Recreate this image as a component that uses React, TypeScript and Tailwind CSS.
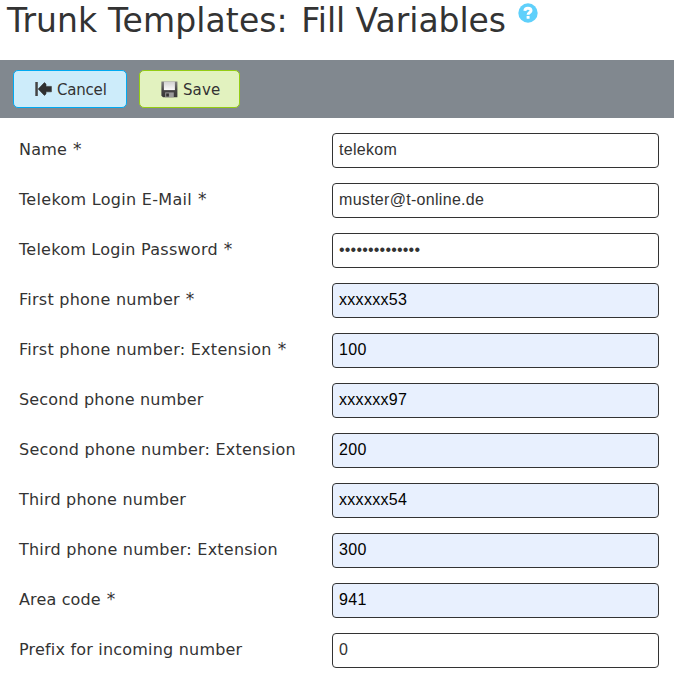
type Field = { label: string; value: string; tracking: string; required?: boolean; filled?: boolean };

const fields: Field[] = [
  { label: "Name", value: "telekom", tracking: "tracking-[0.2px]", required: true },
  { label: "Telekom Login E-Mail", value: "muster@t-online.de", tracking: "tracking-[0.3px]", required: true },
  { label: "Telekom Login Password", value: "••••••••••••••", tracking: "tracking-[0.25px]", required: true },
  { label: "First phone number", value: "xxxxxx53", tracking: "tracking-[0.25px]", required: true, filled: true },
  { label: "First phone number: Extension", value: "100", tracking: "tracking-[0.26px]", required: true, filled: true },
  { label: "Second phone number", value: "xxxxxx97", tracking: "tracking-[0.15px]", filled: true },
  { label: "Second phone number: Extension", value: "200", tracking: "tracking-[0.22px]", filled: true },
  { label: "Third phone number", value: "xxxxxx54", tracking: "tracking-[0.2px]", filled: true },
  { label: "Third phone number: Extension", value: "300", tracking: "tracking-[0.23px]", filled: true },
  { label: "Area code", value: "941", tracking: "tracking-[0.15px]", required: true, filled: true },
  { label: "Prefix for incoming number", value: "0", tracking: "tracking-[0.2px]" },
];

function HelpIcon() {
  return (
    <svg className="mt-[3px] ml-3 shrink-0" width="20" height="20" viewBox="0 0 20 20">
      <circle cx="10" cy="10" r="9.7" fill="#5fd0fb" />
      <path d="M6.9 7.8C7 6 8.2 5.3 9.9 5.3s3.1.8 3.1 2.4c0 1.9-2.9 1.8-2.9 4.1" fill="none" stroke="#fff" strokeWidth="3" />
      <rect x="8.6" y="13" width="3" height="2.8" rx="0.6" fill="#fff" />
    </svg>
  );
}

function BackIcon() {
  return (
    <svg width="17" height="16" viewBox="0 0 17 16" className="shrink-0">
      <path d="M0.3 1h2.5v14H0.3z" fill="#444" />
      <path d="M3.2 8 9.4 1.6 11 3v2.4h5.4v5.4H11V13l-1.6 1.4z" fill="#303030" stroke="#303030" strokeWidth="0.6" strokeLinejoin="round" />
    </svg>
  );
}

function SaveIcon() {
  return (
    <svg width="17" height="17" viewBox="0 0 17 17" className="shrink-0">
      <defs>
        <linearGradient id="disk" x1="0" y1="0" x2="0" y2="1">
          <stop offset="0" stopColor="#808080" />
          <stop offset="0.55" stopColor="#444" />
          <stop offset="1" stopColor="#383838" />
        </linearGradient>
        <linearGradient id="label" x1="0" y1="0" x2="0" y2="1">
          <stop offset="0" stopColor="#d0d0d0" />
          <stop offset="1" stopColor="#fafafa" />
        </linearGradient>
      </defs>
      <path d="M0.4 0.5h16v15.8H2L0.4 14.8z" fill="url(#disk)" />
      <path d="M2.9 0.5h11v8.6h-11z" fill="url(#label)" />
      <path d="M4.2 11.4h8.6v4.9H4.2z" fill="#999" />
      <path d="M5.2 12.4h2.7v3.2H5.2z" fill="#333" />
    </svg>
  );
}

export default function App() {
  return (
    <main className="h-[689px] w-[674px] overflow-hidden bg-white font-['DejaVu_Sans',sans-serif] text-[#333]">
      <header className="flex h-[60px] items-start pl-[7px]">
        <h1 className="whitespace-nowrap pt-px text-[33px] leading-[40px]">
          <span className="mr-[3px] tracking-[0.1px]">Trunk Templates:</span>{" "}
          <span className="tracking-[-0.05px]">Fill Variables</span>
        </h1>
        <HelpIcon />
      </header>
      <div className="flex h-[58px] items-start gap-3 bg-[#81888f] pt-[10px] pl-[13px]">
        <button className="flex h-[38px] w-[114px] items-center rounded-[5px] border border-[#00aaf2] bg-[#cdecfa] pl-[21px] text-[15px]">
          <BackIcon />
          <span className="ml-[5px] pt-[2px] tracking-[-0.2px]">Cancel</span>
        </button>
        <button className="flex h-[38px] w-[101px] items-center rounded-[5px] border border-[#94cc13] bg-[#e2f2bf] pl-[21px] text-[15px]">
          <SaveIcon />
          <span className="ml-[5px] pt-[2px] tracking-[0.1px]">Save</span>
        </button>
      </div>
      <form className="flex flex-col gap-[15px] pt-[15px] pr-[15px] pl-[19px]">
        {fields.map((f) => (
          <div key={f.label} className="flex h-[35px]">
            <label className={`w-[313px] whitespace-nowrap text-[16px] leading-[34px] ${f.tracking}`}>
              {f.label}
              {f.required && <span className="ml-[6px] text-[17px] leading-none">*</span>}
            </label>
            <div
              className={`flex-1 rounded-[4px] border border-[#333] pl-[6px] font-['Liberation_Sans',Arial,sans-serif] text-[16px] leading-[32px] ${
                f.filled ? "bg-[#e8f0fe] text-black" : "bg-white text-[#333]"
              } ${f.value.startsWith("•") ? "tracking-[0.2px]" : "tracking-[0.3px]"}`}
            >
              {f.value}
            </div>
          </div>
        ))}
      </form>
    </main>
  );
}
